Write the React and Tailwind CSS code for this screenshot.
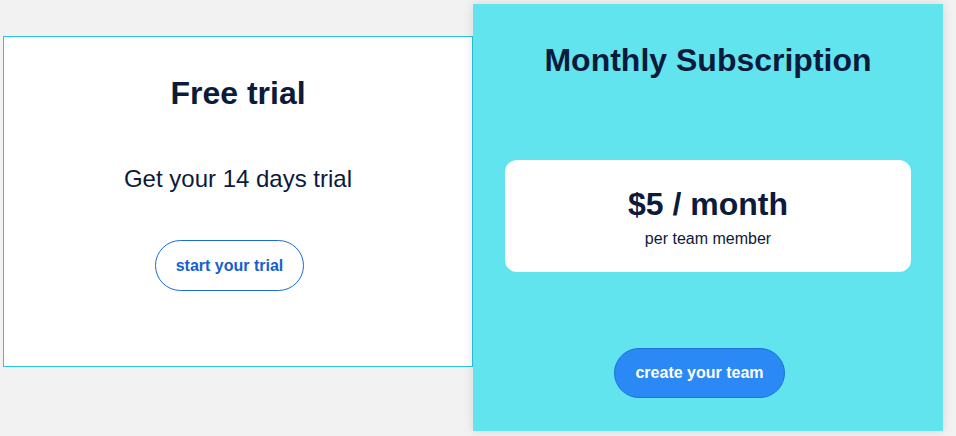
import React from 'react';

const font = { fontFamily: '"Liberation Sans", Arial, sans-serif' };

const FreeTrialCard = () => (
  <div className="mt-[32px] flex h-[331px] w-[470px] flex-col items-center border border-[#2ac6df] bg-white pt-[36px]">
    <h2 className="text-[32px] font-bold leading-[40px] text-[#0c1a3c]">Free trial</h2>
    <p className="mt-[50px] text-[24px] leading-[32px] text-[#0c1a3c]">Get your 14 days trial</p>
    <button className="mt-[45px] mr-[17px] h-[51px] w-[149px] rounded-full border border-[#1a6ad8] bg-white text-[16px] font-bold text-[#1660d0]">
      start your trial
    </button>
  </div>
);

const SubscriptionCard = () => (
  <div className="flex h-[427px] w-[470px] flex-col items-center bg-[#62e4ef] pt-[36px] shadow-[0_0_10px_rgba(0,0,0,0.12)]">
    <h2 className="text-[32px] font-bold leading-[40px] text-[#0c1a3c]">Monthly Subscription</h2>
    <div className="mt-[80px] flex w-[406px] flex-col items-center rounded-xl bg-white pt-[24px] pb-[21px]">
      <p className="text-[32px] font-bold leading-[40px] text-[#0c1a3c]">$5 / month</p>
      <p className="mt-[3px] text-[16px] leading-[24px] text-[#0c1a3c]">per team member</p>
    </div>
    <button className="mt-[76px] mr-[17px] h-[50px] w-[171px] rounded-full border border-[#1f72dc] bg-[#2b89f6] text-[16px] font-bold text-white">
      create your team
    </button>
  </div>
);

export default function App() {
  return (
    <div className="h-[436px] w-[956px] bg-[#f2f2f2]" style={font}>
      <div className="flex items-start pl-[3px] pt-[4px]">
        <FreeTrialCard />
        <SubscriptionCard />
      </div>
    </div>
  );
}
